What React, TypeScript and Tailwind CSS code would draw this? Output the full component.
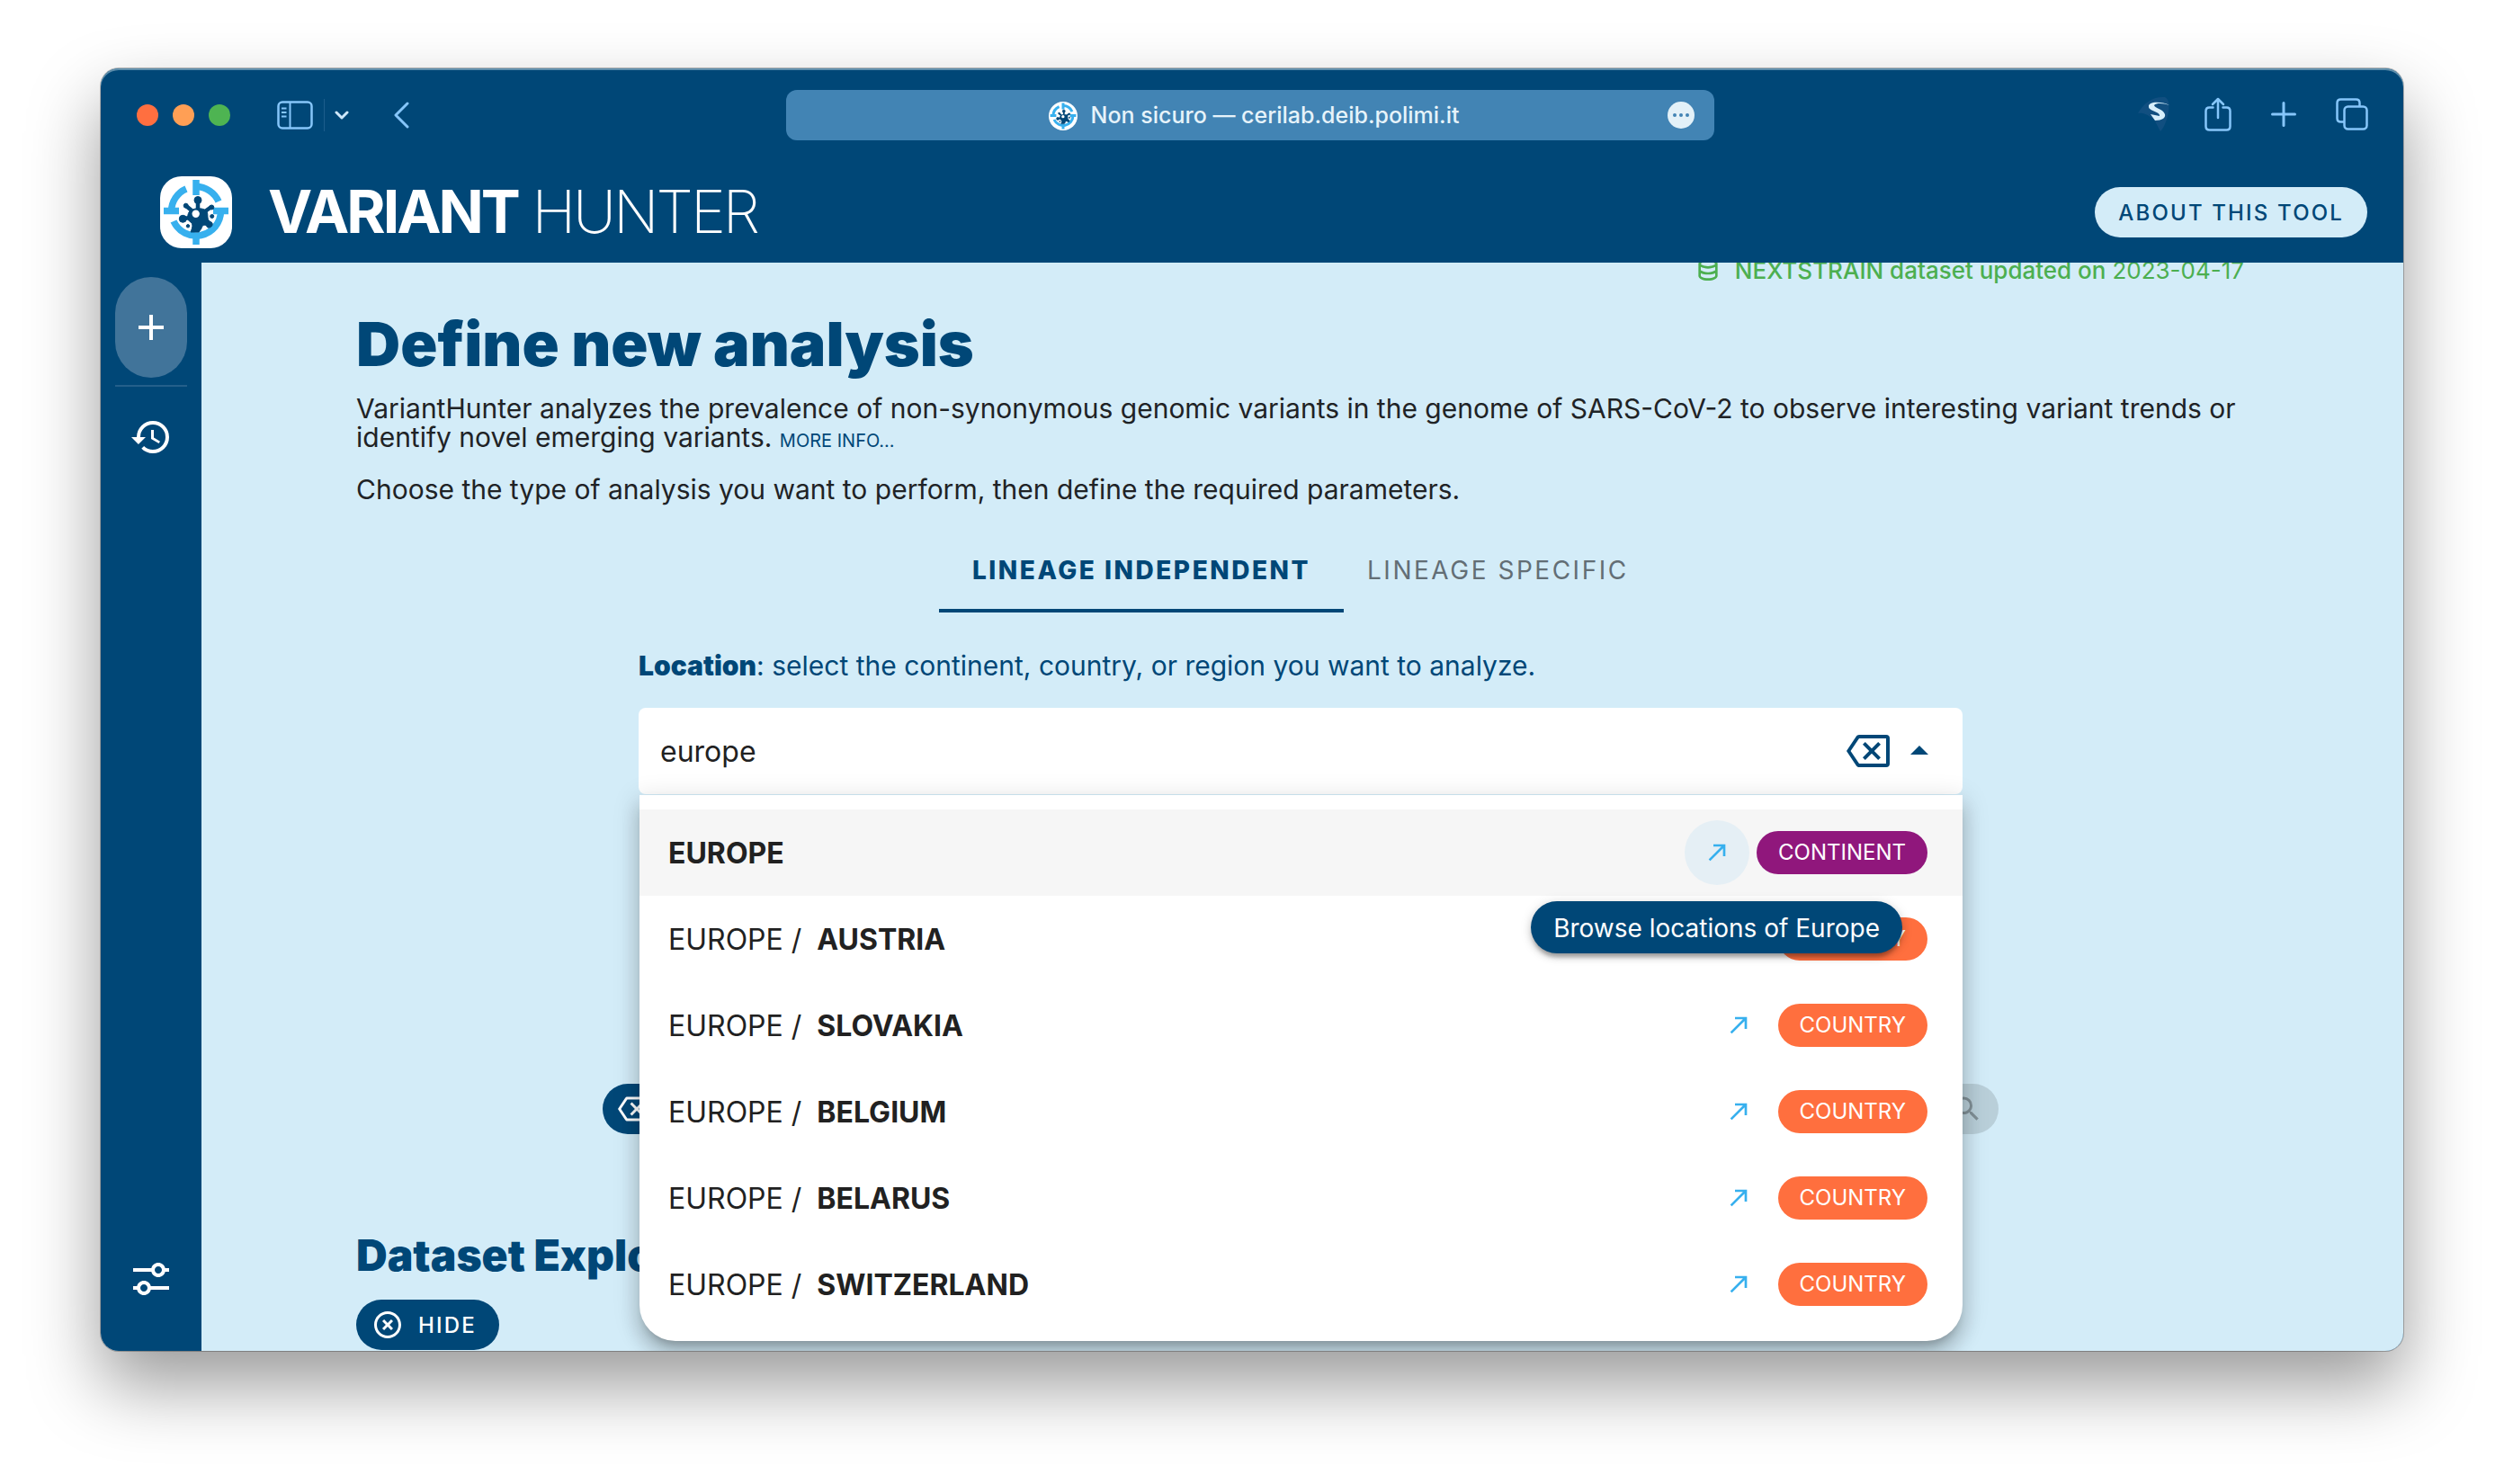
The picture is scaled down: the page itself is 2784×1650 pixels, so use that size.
import { useId, useState } from "react";

const icons = {
  plus: "M19,13H13V19H11V13H5V11H11V5H13V11H19V13Z",
  history:
    "M13.5,8H12V13L16.28,15.54L17,14.33L13.5,12.25V8M13,3A9,9 0 0,0 4,12H1L4.96,16.03L9,12H6A7,7 0 0,1 13,5A7,7 0 0,1 20,12A7,7 0 0,1 13,19C11.07,19 9.32,18.21 8.06,16.94L6.64,18.36C8.23,20 10.5,21 13,21A9,9 0 0,0 22,12A9,9 0 0,0 13,3",
  tune: "M8 13C6.14 13 4.59 14.28 4.14 16H2V18H4.14C4.59 19.72 6.14 21 8 21S11.41 19.72 11.86 18H22V16H11.86C11.41 14.28 9.86 13 8 13M8 19C6.9 19 6 18.1 6 17C6 15.9 6.9 15 8 15S10 15.9 10 17C10 18.1 9.1 19 8 19M19.86 6C19.41 4.28 17.86 3 16 3S12.59 4.28 12.14 6H2V8H12.14C12.59 9.72 14.14 11 16 11S19.41 9.72 19.86 8H22V6H19.86M16 9C14.9 9 14 8.1 14 7C14 5.9 14.9 5 16 5S18 5.9 18 7C18 8.1 17.1 9 16 9Z",
  database:
    "M12 3C7.58 3 4 4.79 4 7V17C4 19.21 7.59 21 12 21S20 19.21 20 17V7C20 4.79 16.42 3 12 3M18 17C18 17.5 15.87 19 12 19S6 17.5 6 17V14.77C7.61 15.55 9.72 16 12 16S16.39 15.55 18 14.77V17M18 12.45C16.7 13.4 14.42 14 12 14C9.58 14 7.3 13.4 6 12.45V9.64C7.47 10.47 9.61 11 12 11C14.39 11 16.53 10.47 18 9.64V12.45M12 9C8.13 9 6 7.5 6 7S8.13 5 12 5C15.87 5 18 6.5 18 7S15.87 9 12 9Z",
  backspace:
    "M19,15.59L17.59,17L14,13.41L10.41,17L9,15.59L12.59,12L9,8.41L10.41,7L14,10.59L17.59,7L19,8.41L15.41,12L19,15.59M22,3A2,2 0 0,1 24,5V19A2,2 0 0,1 22,21H7C6.31,21 5.77,20.64 5.41,20.11L0,12L5.41,3.88C5.77,3.35 6.31,3 7,3H22M22,5H7L2.28,12L7,19H22V5Z",
  menuUp: "M7,14L12,9L17,14H7Z",
  arrow: "M5,17.59L15.59,7H9V5H19V15H17V8.41L6.41,19L5,17.59Z",
  magnify:
    "M9.5,3A6.5,6.5 0 0,1 16,9.5C16,11.11 15.41,12.59 14.44,13.73L14.71,14H15.5L20.5,19L19,20.5L14,15.5V14.71L13.73,14.44C12.59,15.41 11.11,16 9.5,16A6.5,6.5 0 0,1 3,9.5A6.5,6.5 0 0,1 9.5,3M9.5,5C7,5 5,7 5,9.5C5,12 7,14 9.5,14C12,14 14,12 14,9.5C14,7 12,5 9.5,5Z",
  closeCircle:
    "M12,20C7.59,20 4,16.41 4,12C4,7.59 7.59,4 12,4C16.41,4 20,7.59 20,12C20,16.41 16.41,20 12,20M12,2C6.47,2 2,6.47 2,12C2,17.53 6.47,22 12,22C17.53,22 22,17.53 22,12C22,6.47 17.53,2 12,2M14.59,8L12,10.59L9.41,8L8,9.41L10.59,12L8,14.59L9.41,16L12,13.41L14.59,16L16,14.59L13.41,12L16,9.41L14.59,8Z",
};

function Icon({ name, className }: { name: keyof typeof icons; className: string }) {
  return (
    <svg viewBox="0 0 24 24" fill="currentColor" aria-hidden="true" className={"shrink-0 " + className}>
      <path d={icons[name]} />
    </svg>
  );
}

function Logo({ className }: { className: string }) {
  return (
    <svg viewBox="0 0 80 80" aria-hidden="true" className={"shrink-0 bg-white " + className}>
      <g fill="none" stroke="#37b0ee" strokeWidth="7.5">
        <path d="M12.5 42V39A27.5 27.5 0 0 1 29 14" />
        <path d="M40 11.5A27.5 27.5 0 0 1 65 28" />
        <path d="M67.500 39A27.500 27.500 0 0 1 15 50" />
        <path d="M40 4V21M4 38.500H21M59 38.500H76M40 64V76" />
      </g>
      <g fill="#004777" stroke="#004777">
        <circle cx="42" cy="26.500" r="4" />
        <circle cx="28.700" cy="32.700" r="2.500" />
        <circle cx="25.300" cy="47.300" r="4" />
        <circle cx="57.300" cy="34.500" r="2.500" />
        <path d="M42 27V36M29 33L35 38M26 47L34 46M57 34L50 39" strokeWidth="4.500" fill="none" />
        <path d="M32 40C35 35 48 34 52 39C54 43 51 49 57 51C60 53 57 58 53 57C50 52 46 55 46 58L43 62H34C36 57 37 53 34 51C30 49 30 44 32 40Z" />
        <circle cx="57.700" cy="44.500" r="2" />
        <circle cx="31" cy="55.300" r="1.700" />
      </g>
      <circle cx="39.700" cy="41.700" r="4.200" fill="#fff" />
    </svg>
  );
}

function BrowserBar() {
  return (
    <div className="grid h-[104px] grid-cols-[1fr_minmax(0,1032px)_1fr] items-center pr-1">
      <div className="flex items-center pl-10 text-[#86c6fa]">
        <div className="flex gap-4">
          <button aria-label="Close window" className="size-6 rounded-full bg-[#ff6f40]" />
          <button aria-label="Minimise window" className="size-6 rounded-full bg-[#ff9f55]" />
          <button aria-label="Zoom window" className="size-6 rounded-full bg-[#4eb452]" />
        </div>
        <button aria-label="Show sidebar" className="ml-[52px]">
          <svg viewBox="0 0 40 32" fill="none" stroke="currentColor" strokeWidth="2.500" className="h-8 w-10">
            <rect x="1.500" y="1.500" width="37" height="29" rx="4.500" />
            <path d="M14.500 2V30M5 8.500H10.500M5 13H10.500M5 17.500H10.500" strokeWidth="2" />
          </svg>
        </button>
        <span className="ml-3 h-9 w-px bg-[#1d5d8c]" />
        <button aria-label="Tab groups" className="ml-[11px]">
          <svg viewBox="0 0 16 10" fill="none" stroke="#cfe8fb" strokeWidth="3" strokeLinecap="round" strokeLinejoin="round" className="h-[10px] w-4">
            <path d="M2 2L8 8L14 2" />
          </svg>
        </button>
        <button aria-label="Back" className="ml-[49px]">
          <svg viewBox="0 0 18 30" fill="none" stroke="currentColor" strokeWidth="3" strokeLinecap="round" strokeLinejoin="round" className="h-[30px] w-[18px]">
            <path d="M16 2L3 15L16 28" />
          </svg>
        </button>
      </div>
      <div className="flex h-14 items-center rounded-xl bg-[#4284b4] px-[22px]">
        <div className="flex-1" />
        <div className="flex items-center gap-[15px] pt-px pl-2 text-[25px] font-medium whitespace-nowrap text-[#e6f3fa]">
          <Logo className="size-8 rounded-full" />
          Non sicuro — cerilab.deib.polimi.it
        </div>
        <div className="flex flex-1 justify-end">
          <button aria-label="Page settings" className="flex size-[30px] items-center justify-center gap-[3px] rounded-full bg-[#e3f1f8]">
            <span className="size-1 rounded-full bg-[#4284b4]" />
            <span className="size-1 rounded-full bg-[#4284b4]" />
            <span className="size-1 rounded-full bg-[#4284b4]" />
          </button>
        </div>
      </div>
      <div className="flex items-center justify-end gap-11 pr-[35px] pb-[2px] text-[#86c6fa]">
        <button aria-label="Extension" className="-mr-2">
          <svg viewBox="0 0 40 40" className="size-10">
            <path d="M2 19C8 8 18 0 32 1C38 4 37 14 35 22C33 30 30 36 27 39L20 26C12 20 8 18 2 19Z" fill="#114f80" />
            <path d="M37 10C29 6 13 5 14 12C15 17 27 17 26 22L16 20L21 27C29 27 33 24 32 20C30 14 20 13 20 10C23 7 31 8 37 10Z" fill="#d7effb" />
          </svg>
        </button>
        <button aria-label="Share">
          <svg viewBox="0 0 30 38" fill="none" stroke="currentColor" strokeWidth="2.500" strokeLinecap="round" strokeLinejoin="round" className="h-[38px] w-[30px]">
            <path d="M9.500 11.500H5.500Q1.500 11.500 1.500 15.500V32.500Q1.500 36.500 5.500 36.500H24.500Q28.500 36.500 28.500 32.500V15.500Q28.500 11.500 24.500 11.500H20.500" />
            <path d="M15 23V2M9 8L15 2L21 8" />
          </svg>
        </button>
        <button aria-label="New tab">
          <svg viewBox="0 0 28 28" fill="none" stroke="currentColor" strokeWidth="3" strokeLinecap="round" className="size-7">
            <path d="M14 1.500V26.500M1.500 14H26.500" />
          </svg>
        </button>
        <button aria-label="Tab overview">
          <svg viewBox="0 0 36 36" fill="none" stroke="currentColor" strokeWidth="2.500" strokeLinejoin="round" className="size-9">
            <path d="M9.500 26.500H5.500Q1.500 26.500 1.500 22.500V5.500Q1.500 1.500 5.500 1.500H22.500Q26.500 1.500 26.500 5.500V9" />
            <rect x="9.500" y="9.500" width="25" height="25" rx="4" />
          </svg>
        </button>
      </div>
    </div>
  );
}

function AppHeader() {
  return (
    <header className="flex h-28 items-center justify-between pr-10 pl-[66px]">
      <div className="flex items-center gap-10">
        <Logo className="size-20 rounded-3xl" />
        <div className="pb-[2px] text-[66px] leading-none font-extralight tracking-[-3px] whitespace-nowrap text-white">
          <b className="font-bold">VARIANT</b> HUNTER
        </div>
      </div>
      <button className="h-14 rounded-full bg-[#d3ecf8] px-[26px] pt-[2px] text-2xl font-medium tracking-[0.09em] text-[#004777]">
        ABOUT THIS TOOL
      </button>
    </header>
  );
}

function Sidebar() {
  return (
    <nav className="flex w-28 shrink-0 flex-col items-center pt-4 pb-14 text-white">
      <button aria-label="New analysis" className="flex h-28 w-20 items-center justify-center rounded-full bg-[#41749a]">
        <Icon name="plus" className="size-12" />
      </button>
      <hr className="mt-2 h-[2px] w-20 border-0 bg-[#245f8a]" />
      <button aria-label="History" className="mt-8">
        <Icon name="history" className="size-12" />
      </button>
      <button aria-label="Settings" className="mt-auto">
        <Icon name="tune" className="size-12" />
      </button>
    </nav>
  );
}

type Place = { parent?: string; name: string; kind: "CONTINENT" | "COUNTRY" };

const places: Place[] = [
  { name: "EUROPE", kind: "CONTINENT" },
  { parent: "EUROPE", name: "AUSTRIA", kind: "COUNTRY" },
  { parent: "EUROPE", name: "SLOVAKIA", kind: "COUNTRY" },
  { parent: "EUROPE", name: "BELGIUM", kind: "COUNTRY" },
  { parent: "EUROPE", name: "BELARUS", kind: "COUNTRY" },
  { parent: "EUROPE", name: "SWITZERLAND", kind: "COUNTRY" },
];

function PlaceRow({ place, active }: { place: Place; active: boolean }) {
  return (
    <li className={"relative flex h-24 items-center justify-between pr-[39px] pl-8 text-[32px] text-[#212121] " + (active ? "bg-[#f6f6f6]" : "")}>
      <div className="flex gap-[17px] pt-[2px] whitespace-nowrap">
        {place.parent && <span>{place.parent} /</span>}
        <b className="font-bold">{place.name}</b>
      </div>
      <div className="flex items-center gap-2">
        <button
          aria-label={"Browse locations of " + place.name}
          className={"flex size-[72px] items-center justify-center rounded-full text-[#37b0ee] " + (active ? "bg-[#e5eff5]" : "")}
        >
          <Icon name="arrow" className="size-8" />
        </button>
        <span
          className={
            "flex h-12 items-center rounded-full px-6 text-2xl text-white " +
            (place.kind === "CONTINENT" ? "bg-[#90177c]" : "bg-[#ff6f3e]")
          }
        >
          {place.kind}
        </span>
      </div>
      {active && (
        <div
          role="tooltip"
          className="absolute top-[102px] right-[67px] z-10 flex h-[58px] items-center rounded-full bg-[#004777] px-[25px] pt-[2px] text-[28px] whitespace-nowrap text-white shadow-[0_6px_4px_-2px_rgba(0,0,0,0.25),0_4px_8px_rgba(0,0,0,0.14),0_2px_14px_rgba(0,0,0,0.12)]"
        >
          Browse locations of Europe
        </div>
      )}
    </li>
  );
}

function LocationField() {
  const id = useId();
  const [value, setValue] = useState("europe");
  return (
    <div className="mx-auto w-[1472px] max-w-full">
      <label htmlFor={id} className="mt-[39px] block text-[30px] leading-10 text-[#004777]">
        <b className="font-black">Location</b>: select the continent, country, or region you want to analyze.
      </label>
      <div className="relative mt-[27px]">
        <div className="flex h-24 items-center rounded-lg bg-white px-6 text-[#004777]">
          <input
            id={id}
            value={value}
            onChange={(e) => setValue(e.target.value)}
            className="h-full min-w-0 flex-1 bg-transparent text-[32px] text-[#212121] outline-none"
          />
          <button aria-label="Clear location">
            <Icon name="backspace" className="size-12" />
          </button>
          <button aria-label="Close list" className="ml-[9px]">
            <Icon name="menuUp" className="size-12" />
          </button>
        </div>
        <ul className="absolute top-[97px] right-0 left-px z-10 rounded-b-[40px] bg-white pt-4 pb-[15px] shadow-[0_10px_10px_-6px_rgba(0,0,0,0.2),0_16px_20px_2px_rgba(0,0,0,0.14),0_6px_28px_4px_rgba(0,0,0,0.12)]">
          {places.map((place, i) => (
            <PlaceRow key={place.name} place={place} active={i === 0} />
          ))}
        </ul>
      </div>
    </div>
  );
}

function Content() {
  return (
    <main className="min-w-0 flex-1 overflow-hidden bg-[#d3ecf8] pr-44 pl-[172px] text-[#1f2326]">
      <div className="-mt-2 mr-px flex h-8 items-center justify-end gap-[14px] text-[26px] text-[#4caf50]">
        <Icon name="database" className="size-8" />
        <p>
          <span className="font-medium">NEXTSTRAIN dataset updated on </span>
          2023-04-17
        </p>
      </div>
      <h1 className="mt-[26px] text-[68px] leading-[80px] font-black text-[#004777]">Define new analysis</h1>
      <p className="mt-4 text-[30px] leading-8">
        VariantHunter analyzes the prevalence of non-synonymous genomic variants in the genome of SARS-CoV-2 to observe
        interesting variant trends or identify novel emerging variants.{" "}
        <a href="#info" className="text-xl leading-none text-[#004777]">
          MORE INFO...
        </a>
      </p>
      <p className="mt-[26px] text-[30px] leading-8">
        Choose the type of analysis you want to perform, then define the required parameters.
      </p>
      <div role="tablist" className="mt-[25px] flex h-24 justify-center text-[28px] tracking-[0.09em]">
        <button role="tab" aria-selected="true" className="w-[450px] border-b-4 border-[#004777] pt-[6px] font-extrabold text-[#004777]">
          LINEAGE INDEPENDENT
        </button>
        <button role="tab" aria-selected="false" className="w-[354px] pt-[2px] pl-[26px] text-left text-[#636e75]">
          LINEAGE SPECIFIC
        </button>
      </div>
      <LocationField />
      <div className="mx-auto mt-[322px] flex w-[1552px] max-w-full justify-between">
        <button aria-label="Clear all" className="flex h-14 w-52 items-center rounded-full bg-[#004777] pl-[17px] text-white">
          <Icon name="backspace" className="size-9" />
        </button>
        <button aria-label="Analyze" disabled className="flex h-14 w-52 items-center justify-end rounded-full bg-black/12 pr-[17px] text-black/30">
          <Icon name="magnify" className="size-9" />
        </button>
      </div>
      <h2 className="mt-[107px] text-5xl leading-[56px] font-black text-[#004777]">Dataset Explorer</h2>
      <button className="mt-[21px] flex h-14 items-center gap-4 rounded-full bg-[#004777] pr-[25px] pl-[17px] text-2xl font-medium tracking-[0.09em] text-white">
        <Icon name="closeCircle" className="size-9" />
        <span className="pt-[2px]">HIDE</span>
      </button>
    </main>
  );
}

export default function App() {
  return (
    <div className="flex h-screen bg-white px-28 pt-[76px] pb-[148px] font-[Inter,sans-serif]">
      <div className="flex min-w-0 flex-1 rounded-[20px] shadow-[0_0_0_1px_rgba(0,0,0,0.25),0_38px_80px_rgba(0,0,0,0.4)]">
        <div className="flex min-w-0 flex-1 flex-col overflow-hidden rounded-[20px] bg-[#004777] shadow-[inset_0_2px_0_#5f8fac]">
          <BrowserBar />
          <AppHeader />
          <div className="flex min-h-0 flex-1">
            <Sidebar />
            <Content />
          </div>
        </div>
      </div>
    </div>
  );
}
